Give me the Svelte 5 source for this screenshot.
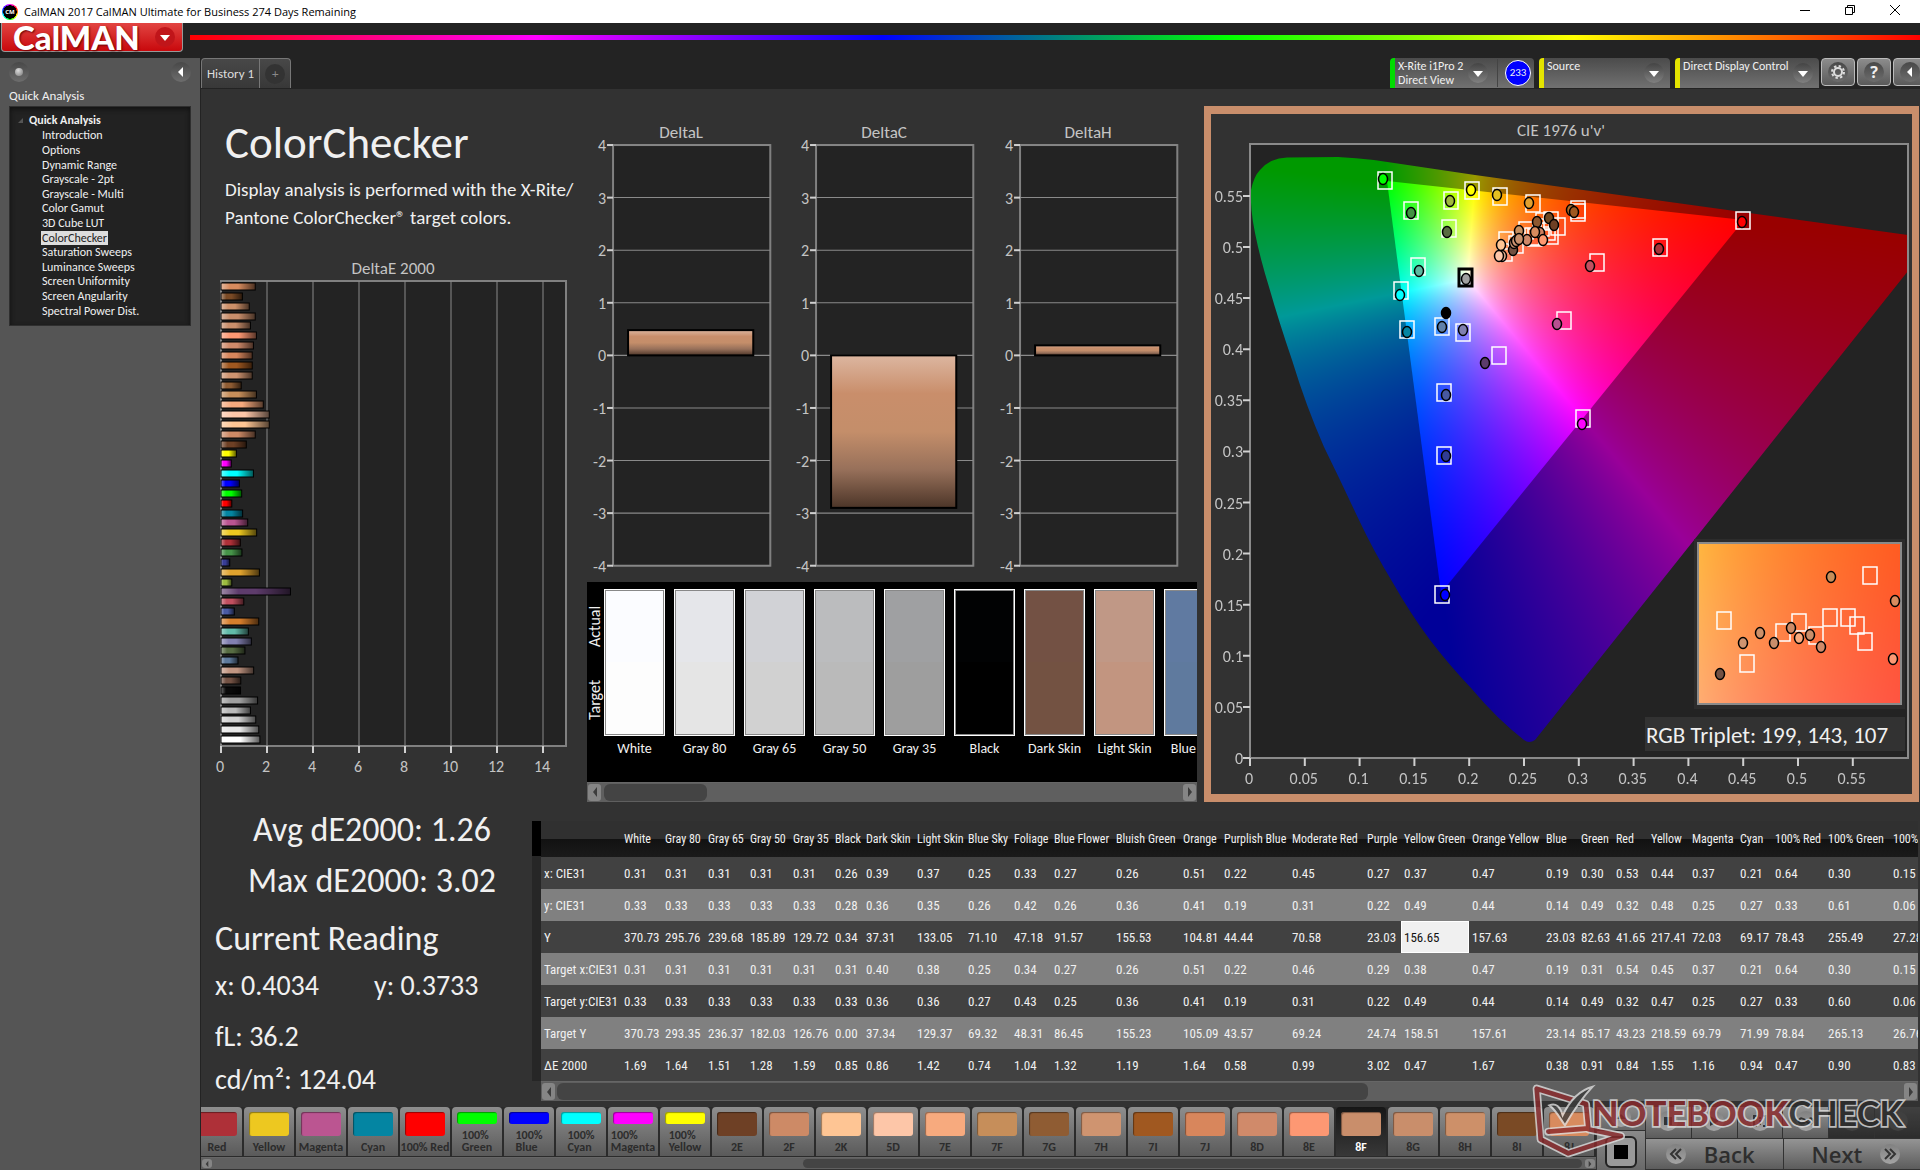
<script lang="ts">
  import { onMount } from "svelte";

  const menu = [
    "Introduction", "Options", "Dynamic Range", "Grayscale - 2pt", "Grayscale - Multi",
    "Color Gamut", "3D Cube LUT", "ColorChecker", "Saturation Sweeps", "Luminance Sweeps",
    "Screen Uniformity", "Screen Angularity", "Spectral Power Dist.",
  ];

  // dE2000 per patch, last measured on top
  const errors: [string, number][] = [
    ["#d88b5e", 1.49], ["#7a4a25", 0.93], ["#cd9069", 1.23], ["#c98e6b", 1.49], ["#c98e6b", 1.28],
    ["#fd9873", 1.54], ["#d08a6a", 1.41], ["#d8865c", 1.36], ["#a05820", 1.36], ["#cf9470", 1.36],
    ["#8f5c33", 0.88], ["#c68e5a", 1.54], ["#f7aa7e", 1.84], ["#fdc6a8", 2.1], ["#fec594", 2.1],
    ["#cd8a66", 1.49], ["#6e4025", 1.1], ["#ffff00", 0.67], ["#ff00ff", 0.45], ["#00ffff", 1.41],
    ["#0000ff", 0.8], ["#00ff00", 0.9], ["#ff0000", 0.47], ["#0485a2", 0.94], ["#bb5591", 1.16],
    ["#edc820", 1.55], ["#ae3038", 0.84], ["#469449", 0.91], ["#383d96", 0.38], ["#e0a32e", 1.67],
    ["#9dbc40", 0.47], ["#5e3c6c", 3.02], ["#c15060", 0.99], ["#4a5ba4", 0.58], ["#d67e2c", 1.64],
    ["#62bbaa", 1.19], ["#8280b0", 1.32], ["#576c43", 1.04], ["#5e7a9c", 0.74], ["#c29682", 1.42],
    ["#735244", 0.86], ["#0a0a0a", 0.85], ["#a0a0a0", 1.59], ["#bababa", 1.28], ["#d2d2d2", 1.51],
    ["#e8e8e8", 1.64], ["#ffffff", 1.69],
  ];

  const deltas = [
    { name: "DeltaL", value: 0.48 },
    { name: "DeltaC", value: -2.9 },
    { name: "DeltaH", value: 0.19 },
  ];
  const levels = [4, 3, 2, 1, 0, -1, -2, -3, -4];

  const compare = [
    { name: "White", actual: "#fbfcff", target: "#fdfdfd" },
    { name: "Gray 80", actual: "#e5e6ea", target: "#e5e5e5" },
    { name: "Gray 65", actual: "#d1d2d6", target: "#d1d1d1" },
    { name: "Gray 50", actual: "#bbbcbe", target: "#bababa" },
    { name: "Gray 35", actual: "#9fa0a2", target: "#9e9e9e" },
    { name: "Black", actual: "#010203", target: "#000000" },
    { name: "Dark Skin", actual: "#735144", target: "#735242" },
    { name: "Light Skin", actual: "#c09886", target: "#c29580" },
    { name: "Blue Sky", actual: "#607aa1", target: "#5f7a9e" },
  ];

  const targets: [number, number][] = [
    [174, 67], [261, 77], [289, 83], [240, 87], [200, 97], [322, 90], [367, 96], [367, 99],
    [238, 115], [207, 153], [190, 177], [532, 107], [449, 134], [386, 149], [353, 207],
    [196, 216], [231, 213], [252, 219], [288, 242], [233, 279], [233, 342], [372, 305],
    [231, 481], [295, 127], [294, 139], [315, 117], [305, 131], [321, 123], [324, 124],
    [331, 114], [340, 107], [340, 122], [347, 113], [337, 118], [332, 108],
  ];
  const readings: [number, number, string][] = [
    [172, 65, "#00ff00"], [260, 76, "#ffff00"], [286, 81, "#e4c022"], [239, 87, "#a0b83c"],
    [200, 99, "#419241"], [236, 118, "#586c40"], [208, 157, "#5cb8a0"], [255, 165, "#a0a0a0"],
    [189, 181, "#00ffff"], [196, 218, "#0485a2"], [235, 199, "#000000"], [231, 213, "#6080a8"],
    [252, 216, "#8080b0"], [274, 249, "#5c3c6c"], [235, 281, "#4858a0"], [235, 342, "#303c94"],
    [371, 310, "#ff00ff"], [346, 210, "#b85090"], [379, 152, "#c05060"], [448, 135, "#ac3038"],
    [531, 108, "#ff0000"], [234, 481, "#0000ff"], [318, 89, "#e0a030"], [360, 96, "#b06a28"],
    [363, 98, "#a05820"], [338, 104, "#704820"], [343, 111, "#6e4025"], [326, 108, "#8c5830"],
    [308, 117, "#c89060"], [329, 119, "#d08060"], [324, 118, "#d88b5e"], [332, 126, "#ff9870"],
    [316, 126, "#cf8868"], [302, 136, "#745040"], [303, 129, "#c89070"], [305, 127, "#cf9470"],
    [308, 125, "#c8906c"], [290, 131, "#fec594"], [291, 142, "#e8b090"], [288, 142, "#fdc6a8"],
  ];
  const nearTargets: [number, number][] = [
    [513, 507], [536, 550], [572, 519], [588, 509], [605, 522],
    [619, 504], [637, 504], [646, 512], [654, 528], [659, 462],
  ];
  const nearReadings: [number, number, string][] = [
    [620, 463, "#c68e5a"], [684, 487, "#d88b5e"], [549, 519, "#cd9069"], [532, 529, "#cf9470"],
    [563, 529, "#c98e6b"], [580, 514, "#cd8a66"], [588, 524, "#f7aa7e"], [599, 521, "#c98e6b"],
    [610, 533, "#d08a6a"], [509, 560, "#735244"], [682, 545, "#fd9873"],
  ];

  const uTicks = [0, 0.05, 0.1, 0.15, 0.2, 0.25, 0.3, 0.35, 0.4, 0.45, 0.5, 0.55];

  const columns: [string, number][] = [
    ["White", 41], ["Gray 80", 43], ["Gray 65", 42], ["Gray 50", 43], ["Gray 35", 42], ["Black", 31],
    ["Dark Skin", 51], ["Light Skin", 51], ["Blue Sky", 46], ["Foliage", 40], ["Blue Flower", 62],
    ["Bluish Green", 67], ["Orange", 41], ["Purplish Blue", 68], ["Moderate Red", 75], ["Purple", 37],
    ["Yellow Green", 68], ["Orange Yellow", 74], ["Blue", 35], ["Green", 35], ["Red", 35],
    ["Yellow", 41], ["Magenta", 48], ["Cyan", 35], ["100% Red", 53], ["100% Green", 65], ["100% Blue", 60],
  ];
  const rows = [
    ["x: CIE31", "0.31 0.31 0.31 0.31 0.31 0.26 0.39 0.37 0.25 0.33 0.27 0.26 0.51 0.22 0.45 0.27 0.37 0.47 0.19 0.30 0.53 0.44 0.37 0.21 0.64 0.30 0.15"],
    ["y: CIE31", "0.33 0.33 0.33 0.33 0.33 0.28 0.36 0.35 0.26 0.42 0.26 0.36 0.41 0.19 0.31 0.22 0.49 0.44 0.14 0.49 0.32 0.48 0.25 0.27 0.33 0.61 0.06"],
    ["Y", "370.73 295.76 239.68 185.89 129.72 0.34 37.31 133.05 71.10 47.18 91.57 155.53 104.81 44.44 70.58 23.03 156.65 157.63 23.03 82.63 41.65 217.41 72.03 69.17 78.43 255.49 27.28"],
    ["Target x:CIE31", "0.31 0.31 0.31 0.31 0.31 0.31 0.40 0.38 0.25 0.34 0.27 0.26 0.51 0.22 0.46 0.29 0.38 0.47 0.19 0.31 0.54 0.45 0.37 0.21 0.64 0.30 0.15"],
    ["Target y:CIE31", "0.33 0.33 0.33 0.33 0.33 0.33 0.36 0.36 0.27 0.43 0.25 0.36 0.41 0.19 0.31 0.22 0.49 0.44 0.14 0.49 0.32 0.47 0.25 0.27 0.33 0.60 0.06"],
    ["Target Y", "370.73 293.35 236.37 182.03 126.76 0.00 37.34 129.37 69.32 48.31 86.45 155.23 105.09 43.57 69.24 24.74 158.51 157.61 23.14 85.17 43.23 218.59 69.79 71.99 78.84 265.13 26.76"],
    ["ΔE 2000", "1.69 1.64 1.51 1.28 1.59 0.85 0.86 1.42 0.74 1.04 1.32 1.19 1.64 0.58 0.99 3.02 0.47 1.67 0.38 0.91 0.84 1.55 1.16 0.94 0.47 0.90 0.83"],
  ].map(([label, cells]) => ({ label, cells: cells.split(" ") }));

  const patches: [string, string][] = [
    ["Red", "#ae3038"], ["Yellow", "#edc820"], ["Magenta", "#bb5591"], ["Cyan", "#0485a2"],
    ["100% Red", "#ff0000"], ["100%\nGreen", "#00ff00"], ["100%\nBlue", "#0000ff"],
    ["100%\nCyan", "#00ffff"], ["100%\nMagenta", "#ff00ff"], ["100%\nYellow", "#ffff00"],
    ["2E", "#6e4025"], ["2F", "#cd8a66"], ["2K", "#fec594"], ["5D", "#fdc6a8"], ["7E", "#f7aa7e"],
    ["7F", "#c68e5a"], ["7G", "#8f5c33"], ["7H", "#cf9470"], ["7I", "#a05820"], ["7J", "#d8865c"],
    ["8D", "#d08a6a"], ["8E", "#fd9873"], ["8F", "#c98e6b"], ["8G", "#c98e6b"], ["8H", "#cd9069"],
    ["8I", "#7a4a25"], ["8J", "#d88b5e"],
  ];
  let selected = $state("8F");

  let diagram: HTMLCanvasElement;
  let inset: HTMLCanvasElement;

  const locus =
    "M37 13.5 L88 13 C100 13.5 112 14.5 124 16 L225 31 L658 91 L658 127 L285 596 Q279 600 274 596 " +
    "Q247 575 221 544 Q200 522 180 496 Q160 469 143 439 Q124 408 108 374 L90 336 L74 303 " +
    "Q56 262 42 216 Q29 178 19 143 Q10 114 5 89 Q0 65 1 46 Q4 32 10 26 Q20 14 37 13.5 Z";
  const gamut = "M137 37 L494 76 L191 449 Z";

  // fills a w x h raster with the brightest colour for each u'v'
  function chroma(w: number, h: number, u0: number, u1: number, v0: number, v1: number, dim: number) {
    const layer = document.createElement("canvas");
    layer.width = w;
    layer.height = h;
    const ctx = layer.getContext("2d")!;
    const img = ctx.createImageData(w, h);
    for (let j = 0; j < h; j++) {
      for (let i = 0; i < w; i++) {
        const u = u0 + ((u1 - u0) * i) / w;
        const v = Math.max(v1 - ((v1 - v0) * j) / h, 0.001);
        const X = (9 * u) / (4 * v);
        const Z = (12 - 3 * u - 20 * v) / (4 * v);
        const r = Math.max(3.2406 * X - 1.5372 - 0.4986 * Z, 0);
        const g = Math.max(-0.9689 * X + 1.8758 + 0.0415 * Z, 0);
        const b = Math.max(0.0557 * X - 0.204 + 1.057 * Z, 0);
        const k = (255 * dim) / Math.max(r, g, b);
        img.data.set([r * k, g * k, b * k, 255], (j * w + i) * 4);
      }
    }
    ctx.putImageData(img, 0, 0);
    return layer;
  }

  onMount(() => {
    const ctx = diagram.getContext("2d")!;
    ctx.save();
    ctx.clip(new Path2D(locus));
    ctx.drawImage(chroma(658, 614, 0, 0.6, 0, 0.6, 0.6), 0, 0);
    ctx.restore();
    ctx.clip(new Path2D(gamut));
    ctx.drawImage(chroma(658, 614, 0, 0.6, 0, 0.6, 1), 0, 0);
    inset.getContext("2d")!.drawImage(chroma(203, 161, 0.222, 0.272, 0.495, 0.519, 1), 0, 0);
  });
</script>

{#snippet scrollbar(name: string, before: number, thumb: number, after: number)}
  <div class="scroll">
    <button type="button" aria-label="Scroll {name} left"><svg viewBox="0 0 6 12"><path d="M5 1v10L1 6z" /></svg></button>
    <div class="track">
      <i style:flex-grow={before}></i><b style:flex-grow={thumb}></b><i style:flex-grow={after}></i>
    </div>
    <button type="button" aria-label="Scroll {name} right"><svg viewBox="0 0 6 12"><path d="M1 1v10l4-5z" /></svg></button>
  </div>
{/snippet}

{#snippet caret()}
  <span class="knob"><svg viewBox="0 0 20 20"><path d="M5 8h10l-5 6z" fill="#fff" /></svg></span>
{/snippet}

<div class="app">
  <header class="titlebar">
    <span class="appicon">CM</span>
    <span class="title">CalMAN 2017 CalMAN Ultimate for Business 274 Days Remaining</span>
    <div class="winbtns">
      <button type="button" aria-label="Minimize"><svg viewBox="0 0 12 12"><path d="M1 6.5h10" /></svg></button>
      <button type="button" aria-label="Restore"><svg viewBox="0 0 12 12"><path d="M1.500 3.500h7v7h-7zM3.500 3.500v-2h7v7h-2" /></svg></button>
      <button type="button" aria-label="Close"><svg viewBox="0 0 12 12"><path d="M1 1l10 10M11 1L1 11" /></svg></button>
    </div>
  </header>

  <div class="brandbar">
    <button type="button" class="brand">CalMAN {@render caret()}</button>
    <div class="spectrum"></div>
  </div>

  <div class="main">
    <aside>
      <div class="sidetop">
        <span class="knob led"></span>
        <button type="button" class="knob" aria-label="Collapse"><svg viewBox="0 0 20 20"><path d="M12 5v10l-5-5z" fill="#fff" /></svg></button>
      </div>
      <h2>Quick Analysis</h2>
      <nav>
        <strong><svg viewBox="0 0 6 6"><path d="M6 0v6H0z" /></svg>Quick Analysis</strong>
        <ul>
          {#each menu as item}
            <li><a href="#top" class:current={item === "ColorChecker"}>{item}</a></li>
          {/each}
        </ul>
      </nav>
    </aside>

    <div class="content">
      <div class="tabs">
        <button type="button" class="tab">History 1</button>
        <button type="button" class="tab add" aria-label="Add tab"><span class="knob">+</span></button>
        <div class="devices">
          <button type="button" class="device meter">
            <span class="name">X-Rite i1Pro 2<br />Direct View</span>{@render caret()}
            <i></i>
            <em>233</em>
          </button>
          <label class="device source">
            <select aria-label="Source"><option>Source</option></select>{@render caret()}
          </label>
          <label class="device display">
            <select aria-label="Display control"><option>Direct Display Control</option></select>{@render caret()}
          </label>
          <button type="button" class="square" aria-label="Settings">
            <span class="knob"><svg viewBox="0 0 20 20" fill="none" stroke="#ddd"><circle cx="10" cy="10" r="4" stroke-width="2" /><circle cx="10" cy="10" r="6" stroke-width="2" stroke-dasharray="2.400 2.300" /></svg></span>
          </button>
          <button type="button" class="square" aria-label="Help"><span class="knob help">?</span></button>
          <button type="button" class="square" aria-label="Collapse devices">
            <span class="knob"><svg viewBox="0 0 20 20"><path d="M12 5v10l-5-5z" fill="#fff" /></svg></span>
          </button>
        </div>
      </div>

      <div class="workspace">
        <section class="charts">
          <div class="left">
            <h1>ColorChecker</h1>
            <p>Display analysis is performed with the X-Rite/<br />Pantone ColorChecker® target colors.</p>
            <svg class="chart" viewBox="0 0 376 522">
              <defs>
                <linearGradient id="shadeX">
                  <stop offset="0" stop-color="#fff" stop-opacity="0.4" />
                  <stop offset="0.25" stop-color="#fff" stop-opacity="0" />
                  <stop offset="0.5" stop-color="#000" stop-opacity="0" />
                  <stop offset="1" stop-color="#000" stop-opacity="0.65" />
                </linearGradient>
              </defs>
              <text x="183" y="16" text-anchor="middle" class="caption">DeltaE 2000</text>
              <rect x="11" y="23" width="345" height="465" class="plot" />
              {#each [0, 2, 4, 6, 8, 10, 12, 14] as t}
                <path d="M{11 + t * 23} 23v465" class="grid" />
                <path d="M{11 + t * 23} 488v7" class="tick" />
                <text x={10 + t * 23} y="514" text-anchor="middle">{t}</text>
              {/each}
              {#each errors as [color, value], i}
                {@const y = 25 + Math.round(i * 9.85)}
                <rect x="11" {y} width={value * 23} height="7" fill={color} />
                <rect x="11" {y} width={value * 23} height="7" fill="url(#shadeX)" stroke="#000" />
              {/each}
            </svg>
          </div>

          <div class="middle">
            <div class="deltas">
              {#each deltas as d}
                <svg class="chart" viewBox="0 -4 203 461">
                  <defs>
                    <linearGradient id="shadeY" x2="0" y2="1">
                      <stop offset="0" stop-color="#dcb6a0" />
                      <stop offset="0.25" stop-color="#c98e6b" />
                      <stop offset="0.5" stop-color="#c48e6a" />
                      <stop offset="0.75" stop-color="#97705a" />
                      <stop offset="1" stop-color="#4c3528" />
                    </linearGradient>
                  </defs>
                  <text x="94" y="14" text-anchor="middle" class="caption">{d.name}</text>
                  <rect x="26" y="21" width="157" height="420" class="plot" />
                  {#each levels as n, i}
                    <path d="M26 {21 + i * 52.5}h157" class="grid" />
                    <path d="M20 {21 + i * 52.5}h6" class="tick" />
                    <text x="19" y={27 + i * 52.5} text-anchor="end">{n}</text>
                  {/each}
                  <rect
                    x="41" width="125" fill="url(#shadeY)" stroke="#000" stroke-width="2"
                    y={231 - Math.max(d.value, 0) * 52.5} height={Math.abs(d.value) * 52.5}
                  />
                </svg>
              {/each}
            </div>
            <div class="compare">
              <div class="patches">
                <div class="sides"><span>Actual</span><span>Target</span></div>
                {#each compare as c}
                  <figure>
                    <div><i style:background={c.actual}></i><i style:background={c.target}></i></div>
                    <figcaption>{c.name}</figcaption>
                  </figure>
                {/each}
              </div>
              {@render scrollbar("patches", 1, 103, 474)}
            </div>
          </div>

          <div class="cie">
            <svg class="chart" viewBox="0 0 701 680">
              <text x="350" y="22" text-anchor="middle" class="caption">CIE 1976 u'v'</text>
              <rect x="39" y="30" width="658" height="614" class="plot" />
              <foreignObject x="39" y="30" width="658" height="614">
                <canvas bind:this={diagram} width="658" height="614"></canvas>
              </foreignObject>
              <rect x="39" y="30" width="658" height="614" class="frame" />
              {#each uTicks as t}
                <path d="M{39 + t * 1096} 644v8M39 {644 - t * 1022}h-7" class="tick" />
                <text x={38 + t * 1096} y="670" text-anchor="middle">{t}</text>
                <text x="32" y={650 - t * 1022} text-anchor="end">{t}</text>
              {/each}
              <g class="target">
                {#each targets as [x, y]}<rect x={x - 7} y={y - 9} width="14" height="17" />{/each}
                <rect x="248" y="155" width="13" height="17" class="white-point" />
              </g>
              <g class="reading">
                {#each readings as [x, y, color]}<ellipse cx={x} cy={y} rx="4.500" ry="5.500" fill={color} />{/each}
              </g>

              <rect x="483" y="425" width="211" height="170" fill="#2c2c2c" />
              <foreignObject x="487" y="429" width="203" height="161">
                <canvas bind:this={inset} width="203" height="161"></canvas>
              </foreignObject>
              <rect x="487" y="429" width="203" height="161" class="frame" />
              <g class="target">
                {#each nearTargets as [x, y]}<rect x={x - 7} y={y - 9} width="14" height="17" />{/each}
              </g>
              <g class="reading">
                {#each nearReadings as [x, y, color]}<ellipse cx={x} cy={y} rx="4.500" ry="5.500" fill={color} />{/each}
              </g>
              <rect x="434" y="603" width="260" height="34" fill="#323232" />
              <text x="435" y="629" class="triplet">RGB Triplet: 199, 143, 107</text>
            </svg>
          </div>
        </section>

        <section class="results">
          <div class="stats">
            <p class="big">Avg dE2000: 1.26</p>
            <p class="big">Max dE2000: 3.02</p>
            <h3>Current Reading</h3>
            <p class="xy"><span>x: 0.4034</span><span>y: 0.3733</span></p>
            <p class="lum">fL: 36.2</p>
            <p class="lum">cd/m²: 124.04</p>
          </div>
          <div class="gutter"></div>
          <div class="tablewrap">
            <div class="clip">
              <table>
                <colgroup>
                  <col style:width="80px" />
                  {#each columns as [, width]}<col style:width="{width}px" />{/each}
                </colgroup>
                <thead>
                  <tr><td></td>{#each columns as [name]}<th scope="col">{name}</th>{/each}</tr>
                </thead>
                <tbody>
                  {#each rows as row}
                    <tr>
                      <th scope="row">{row.label}</th>
                      {#each row.cells as cell}<td class:edit={cell === "156.65"}>{cell}</td>{/each}
                    </tr>
                  {/each}
                </tbody>
              </table>
            </div>
            {@render scrollbar("table", 0, 816, 538)}
          </div>
        </section>

        <footer>
          <div class="strip">
            <div class="tiles">
              {#each patches as [name, color]}
                <button type="button" class="tile" class:on={name === selected} onclick={() => (selected = name)}>
                  <i style:background={color}></i><span>{name}</span>
                </button>
              {/each}
            </div>
            {@render scrollbar("swatches", 591, 781, 1)}
          </div>
          <div class="window">
            <button type="button" aria-label="Show levels"><span class="disc"><svg viewBox="0 0 20 20"><path d="M5 12l5-5 5 5z" /></svg></span></button>
            <button type="button" aria-label="Pattern window" class="pattern"><i></i></button>
          </div>
          <div class="transport">
            <div class="tools">
              <button type="button" aria-label="Stop"><span class="disc"><svg viewBox="0 0 20 20"><path d="M6 6h8v8H6z" /></svg></span></button>
              <button type="button" aria-label="Read"><span class="disc"><svg viewBox="0 0 20 20"><path d="M6 5l9 5-9 5z" /></svg></span></button>
              <button type="button" aria-label="Read series"><span class="disc"><svg viewBox="0 0 20 20" class="line"><path d="M7 5H4v10h3M13 5h3v10h-3M10 6v2M10 9v2M10 12v2" /></svg></span></button>
              <button type="button" aria-label="Read continuous"><span class="disc"><svg viewBox="0 0 20 20" class="line"><path d="M10 10C8 7 3 6 3 10s5 3 7 0 7-4 7 0-5 3-7 0z" /></svg></span></button>
              <button type="button" aria-label="Refresh" disabled><span class="disc"><svg viewBox="0 0 20 20" class="line"><path d="M5 9a5 5 0 0 1 9-2M15 4v4h-4M15 11a5 5 0 0 1-9 2M5 16v-4h4" /></svg></span></button>
              <button type="button" aria-label="Record" disabled><span class="disc"></span></button>
            </div>
            <div class="steps">
              <button type="button"><span class="disc"><svg viewBox="0 0 20 20" class="line"><path d="M10 5l-5 5 5 5M15 5l-5 5 5 5" /></svg></span>Back</button>
              <button type="button">Next<span class="disc"><svg viewBox="0 0 20 20" class="line"><path d="M5 5l5 5-5 5M10 5l5 5-5 5" /></svg></span></button>
            </div>
          </div>
        </footer>
      </div>
    </div>
  </div>

  <svg class="watermark" viewBox="0 0 1200 270">
    <g fill="none" stroke-linejoin="round" stroke-linecap="round">
      <path d="M85 155L205 145 198 72 50 26 62 178 145 220 303 168 205 148" stroke="#ddd" stroke-width="24" />
      <path d="M85 155L205 145 198 72 50 26 62 178 145 220 303 168 205 148" stroke="#8c2a2c" stroke-width="14" />
    </g>
    <path d="M88 76c20-8 32 4 40 30C150 60 180 30 218 20c-34 36-60 76-83 116C120 116 108 90 88 76z" fill="#3c3c3c" stroke="#ddd" stroke-width="6" />
    <text x="216" y="137" class="nb">NOTEBOOK<tspan class="ck">CHECK</tspan></text>
  </svg>
</div>

<style>
  :global(body) {
    background: #232323;
  }
  .app {
    position: relative;
    min-height: 100vh;
    display: flex;
    flex-direction: column;
    overflow: hidden;
    background: #232323;
    color: #f0f0f0;
    font-family: Carlito, Calibri, Lato, sans-serif;
    font-size: 12px;
  }
  button,
  select {
    appearance: none;
    border: 0;
    margin: 0;
    padding: 0;
    background: none;
    color: inherit;
    font: inherit;
  }
  h1, h2, h3, p, ul, figure {
    margin: 0;
    padding: 0;
    font-weight: 400;
  }
  .titlebar {
    height: 23px;
    display: flex;
    align-items: center;
    gap: 6px;
    padding: 0 3px 0 2px;
    background: #fff;
    color: #000;
    font-family: "Open Sans", sans-serif;
    font-size: 11px;
  }
  .appicon {
    width: 16px;
    height: 16px;
    box-sizing: border-box;
    border-radius: 50%;
    background: radial-gradient(#000 58%, transparent 60%), conic-gradient(#f0f, red, #ff0, lime, cyan, blue, #f0f);
    color: #fff;
    font-size: 6px;
    font-weight: 700;
    line-height: 16px;
    text-align: center;
  }
  .title {
    flex: 1;
  }
  .winbtns {
    display: flex;
  }
  .winbtns button {
    width: 45px;
    height: 20px;
  }
  .winbtns svg {
    width: 12px;
    height: 12px;
    fill: none;
    stroke: #000;
  }
  .brandbar {
    height: 35px;
    display: flex;
    align-items: flex-start;
    gap: 7px;
    padding-left: 1px;
  }
  .brand {
    width: 182px;
    height: 29px;
    display: flex;
    align-items: center;
    justify-content: space-between;
    padding: 0 7px 0 11px;
    border: solid #999;
    border-width: 0 1px 1px;
    border-radius: 0 0 4px 4px;
    background: linear-gradient(#e24542, #c8080c);
    color: #fff;
    font-family: Lato, sans-serif;
    font-size: 33px;
    font-weight: 900;
    line-height: 28px;
    text-shadow: 1px 1px 2px #600;
  }
  .brand .knob {
    background: #c0151a;
  }
  .spectrum {
    flex: 1;
    height: 5px;
    margin-top: 12px;
    background: linear-gradient(90deg, red, #f0f 20%, blue 40%, lime 60%, #ff0 80%, red);
  }
  .knob {
    width: 20px;
    height: 20px;
    flex: none;
    display: inline-grid;
    place-items: center;
    border-radius: 50%;
    background: linear-gradient(#484848, #6d6d6d);
  }
  .knob svg {
    width: 20px;
    height: 20px;
  }
  .main {
    flex: 1;
    display: flex;
  }
  aside {
    width: 200px;
    flex: none;
    box-sizing: border-box;
    padding: 4px 9px 0;
    background: #555;
  }
  .sidetop {
    display: flex;
    justify-content: space-between;
  }
  .led::after {
    content: "";
    width: 8px;
    height: 8px;
    border-radius: 50%;
    background: radial-gradient(at 40% 30%, #ddd, #777);
  }
  h2 {
    margin: 5px 0 1px;
    font-size: 13px;
    line-height: 18px;
  }
  nav {
    height: 220px;
    box-sizing: border-box;
    padding: 5px 8px;
    border: 1px solid #2f2f2f;
    background: #222;
    box-shadow: inset 0 2px 5px #111;
  }
  nav strong {
    display: flex;
    align-items: center;
    gap: 6px;
    line-height: 16px;
  }
  nav strong svg {
    width: 5px;
    height: 5px;
    fill: #555;
  }
  ul {
    height: 190px;
    display: grid;
    grid-auto-rows: 1fr;
    list-style: none;
    padding-left: 23px;
  }
  li {
    display: flex;
    align-items: center;
  }
  nav a {
    padding: 0 1px;
    color: inherit;
    line-height: 14px;
    text-decoration: none;
  }
  nav a.current {
    background: #ddd;
    color: #222;
  }
  .content {
    flex: 1;
    min-width: 0;
    display: flex;
    flex-direction: column;
    padding-left: 1px;
  }
  .tabs {
    height: 31px;
    display: flex;
    align-items: flex-start;
  }
  .tab {
    height: 30px;
    box-sizing: border-box;
    padding: 0 5px;
    border: 1px solid #777;
    border-bottom: 0;
    border-radius: 4px 0 0 0;
    background: linear-gradient(#484848, #383838);
    color: #ddd;
    font-size: 13px;
  }
  .tab.add {
    margin-left: -1px;
    border-radius: 0 4px 0 0;
  }
  .add .knob {
    background: #333;
    color: #888;
  }
  .devices {
    margin-left: auto;
    margin-right: -7px;
    display: flex;
    gap: 2px;
  }
  .device {
    height: 30px;
    box-sizing: border-box;
    display: flex;
    align-items: center;
    justify-content: space-between;
    margin-right: 3px;
    padding: 0 6px 0 3px;
    border-left: 5px solid #e4e400;
    border-radius: 4px 4px 0 0;
    background: linear-gradient(#4b4b4b, #717171);
    line-height: 14px;
    text-align: left;
  }
  .device .knob {
    background: linear-gradient(#444, #808080);
  }
  .device select {
    flex: 1;
    height: 30px;
    padding-bottom: 14px;
  }
  .meter {
    width: 144px;
    padding-right: 3px;
    border-color: #0d0;
  }
  .meter .name {
    flex: 1;
    white-space: nowrap;
  }
  .meter i {
    width: 1px;
    height: 28px;
    margin: 0 7px 0 9px;
    background: #444;
  }
  .meter em {
    width: 24px;
    height: 24px;
    flex: none;
    border: 1px solid #fff;
    border-radius: 50%;
    background: #00f;
    font-size: 11px;
    font-style: normal;
    line-height: 24px;
    text-align: center;
  }
  .source {
    width: 131px;
  }
  .display {
    width: 144px;
    margin-right: 0;
  }
  .square {
    width: 34px;
    height: 28px;
    box-sizing: border-box;
    display: grid;
    place-items: center;
    border: 1px solid #bbb;
    border-radius: 4px;
    background: linear-gradient(#8c8c8c, #5a5a5a);
  }
  .help {
    font-family: "Open Sans", sans-serif;
    font-size: 16px;
    font-weight: 700;
    line-height: 20px;
  }
  .workspace {
    flex: 1;
    display: flex;
    flex-direction: column;
    background: #323232;
  }
  .charts {
    display: grid;
    grid-template-columns: 379px minmax(0, 610fr) minmax(0, 715fr);
    gap: 7px;
    padding: 17px 1px 0 0;
  }
  .chart {
    display: block;
    width: 100%;
    fill: #c4c4c4;
    font-size: 16px;
  }
  .caption {
    font-size: 17px;
  }
  .plot {
    fill: #232323;
    stroke: #808080;
    stroke-width: 2;
  }
  .frame {
    fill: none;
    stroke: #8a8a8a;
    stroke-width: 2;
  }
  .grid {
    stroke: #8a8a8a;
    stroke-width: 1;
  }
  .tick {
    stroke: #d0d0d0;
    stroke-width: 2;
  }
  .left h1 {
    padding: 10px 0 0 24px;
    font-size: 45px;
    line-height: 54px;
  }
  .left p {
    padding: 6px 0 26px 24px;
    font-size: 19px;
    line-height: 28px;
    white-space: nowrap;
  }
  .left .chart {
    width: 376px;
    margin-left: 9px;
  }
  .deltas {
    display: grid;
    grid-template-columns: repeat(3, 1fr);
    padding-top: 14px;
  }
  .compare {
    overflow: hidden;
    background: #000;
  }
  .patches {
    height: 200px;
    box-sizing: border-box;
    display: flex;
    gap: 9px;
    padding-top: 7px;
  }
  .sides {
    width: 8px;
    height: 147px;
    flex: none;
    display: flex;
    justify-content: space-around;
    writing-mode: vertical-rl;
    transform: rotate(180deg);
    flex-direction: row-reverse;
    font-size: 16px;
    line-height: 16px;
  }
  figure {
    flex: none;
    width: 61px;
    text-align: center;
    font-size: 14px;
    line-height: 26px;
    white-space: nowrap;
  }
  figure div {
    height: 147px;
    box-sizing: border-box;
    display: flex;
    flex-direction: column;
    border: 1px solid #fff;
    outline: 1px solid #888;
    outline-offset: -2px;
  }
  figure i {
    flex: 1;
  }
  .scroll {
    height: 20px;
    box-sizing: border-box;
    display: flex;
    gap: 2px;
    padding: 1px;
    border-top: 1px solid #666;
    background: #5f5f5f;
  }
  .scroll button {
    width: 13px;
    display: grid;
    place-items: center;
    border-radius: 3px;
    background: #858585;
  }
  .scroll button svg {
    width: 6px;
    height: 12px;
    fill: #3c3c3c;
  }
  .track {
    flex: 1;
    display: flex;
  }
  .track i,
  .track b {
    flex-basis: 0;
  }
  .track b {
    border-radius: 6px;
    background: #444;
  }
  .cie {
    border: solid #c98e6b;
    border-width: 8px 7px;
  }
  canvas {
    display: block;
    width: 100%;
    height: 100%;
  }
  .target {
    fill: none;
    stroke: #fff;
    stroke-width: 1.500;
  }
  .white-point {
    stroke: #000;
    stroke-width: 3;
  }
  .reading {
    stroke: #000;
    stroke-width: 1.500;
  }
  .triplet {
    fill: #f0f0f0;
    font-size: 23px;
  }
  .results {
    display: flex;
    margin-top: 19px;
  }
  .stats {
    width: 331px;
    height: 281px;
    flex: none;
    box-sizing: border-box;
    padding-left: 14px;
  }
  .stats p,
  .stats h3 {
    white-space: nowrap;
  }
  .stats .big {
    width: 314px;
    margin: -17px 0 17px;
    font-size: 34px;
    line-height: 51px;
    text-align: center;
  }
  .stats .big + .big {
    margin-bottom: 13px;
  }
  .stats h3 {
    font-size: 34px;
    line-height: 40px;
  }
  .xy {
    display: flex;
    gap: 55px;
    font-size: 28px;
    line-height: 54px;
  }
  .lum {
    font-size: 28px;
    line-height: 43px;
  }
  .xy + .lum {
    padding-top: 2px;
  }
  .gutter {
    width: 9px;
    flex: none;
    height: 260px;
    background: linear-gradient(#000 35px, #262626 35px);
  }
  .tablewrap {
    flex: 1;
    min-width: 0;
    padding-right: 2px;
  }
  .clip {
    overflow: hidden;
  }
  table {
    width: 1409px;
    table-layout: fixed;
    border-collapse: collapse;
    font-family: "Roboto Condensed", "Open Sans Condensed", "Noto Sans Condensed", Lato, sans-serif;
    font-size: 13px;
  }
  th,
  td {
    height: 32px;
    box-sizing: border-box;
    padding: 0 0 0 3px;
    font-weight: 400;
    text-align: left;
    white-space: nowrap;
  }
  thead tr {
    height: 36px;
    background: linear-gradient(#303030 50%, #121212 50%, #1a1a1a);
    font-size: 12px;
  }
  tbody tr {
    background: #414141;
  }
  tbody tr:nth-child(even) {
    background: #808080;
  }
  .edit {
    background: #f0f0f0;
    box-shadow: inset 0 0 0 1px #fff;
    color: #111;
  }
  footer {
    display: flex;
    gap: 1px;
    height: 62px;
    margin-top: 5px;
  }
  .strip {
    flex: 1;
    min-width: 0;
    overflow: hidden;
  }
  .tiles {
    display: flex;
    gap: 2px;
    margin-left: -9px;
    padding-bottom: 1px;
    background: #2b2b2b;
  }
  .tile {
    width: 50px;
    height: 49px;
    flex: none;
    display: flex;
    flex-direction: column;
    align-items: center;
    padding: 5px 0 3px;
    border-radius: 4px 4px 0 0;
    background: linear-gradient(#8e8e8e, #5a5a5a);
    color: #2c2c2c;
    font-weight: 700;
    line-height: 12px;
    text-align: left;
    white-space: pre;
  }
  .tile i {
    width: 40px;
    flex: 1;
    border-radius: 3px;
    box-shadow: inset 1px 1px 1px #0006;
  }
  .tile span {
    padding-top: 5px;
  }
  .tile.on {
    background: linear-gradient(#161616, #383838);
    color: #fff;
  }
  .strip .scroll {
    height: 12px;
  }
  .strip .scroll button {
    width: 10px;
  }
  .strip .scroll svg {
    height: 8px;
  }
  .window {
    width: 48px;
    display: flex;
    flex-direction: column;
    gap: 1px;
  }
  .window button {
    flex: 1;
    background: linear-gradient(#8a8a8a, #666);
  }
  .window .pattern {
    flex: none;
    height: 42px;
    display: grid;
    place-items: center;
  }
  .pattern i {
    width: 14px;
    height: 14px;
    border: 7px solid #999;
    border-radius: 4px;
    outline: 2px solid #222;
    background: #000;
  }
  .transport {
    width: 274px;
    display: flex;
    flex-direction: column;
    gap: 1px;
  }
  .tools,
  .steps {
    flex: 1;
    display: flex;
    gap: 1px;
  }
  .tools button,
  .steps button {
    flex: 1;
    background: linear-gradient(#949494, #5c5c5c);
  }
  .tools button:disabled {
    background: linear-gradient(#444, #2c2c2c);
    opacity: 0.8;
  }
  .steps button {
    display: flex;
    align-items: center;
    justify-content: space-between;
    padding: 0 20px;
    color: #2e2e2e;
    font-family: "Open Sans", sans-serif;
    font-size: 22px;
    font-weight: 600;
  }
  .steps button:first-child {
    padding-right: 28px;
  }
  .steps button:last-child {
    padding-left: 28px;
  }
  .disc {
    width: 20px;
    height: 20px;
    display: inline-grid;
    place-items: center;
    border-radius: 50%;
    background: linear-gradient(#808080, #a4a4a4);
  }
  :disabled .disc {
    background: #444;
  }
  .disc svg {
    width: 20px;
    height: 20px;
    fill: #333;
  }
  .disc .line {
    fill: none;
    stroke: #333;
    stroke-width: 2;
  }
  .watermark {
    position: absolute;
    right: 0;
    bottom: 0;
    width: 400px;
    height: 90px;
    opacity: 0.8;
    pointer-events: none;
  }
  .nb {
    fill: #8c2a2c;
    stroke: #ddd;
    stroke-width: 10;
    paint-order: stroke;
    font-family: Lato, sans-serif;
    font-size: 103px;
    font-weight: 900;
  }
  .ck {
    fill: #2c2c2c;
    font-weight: 700;
  }
</style>
